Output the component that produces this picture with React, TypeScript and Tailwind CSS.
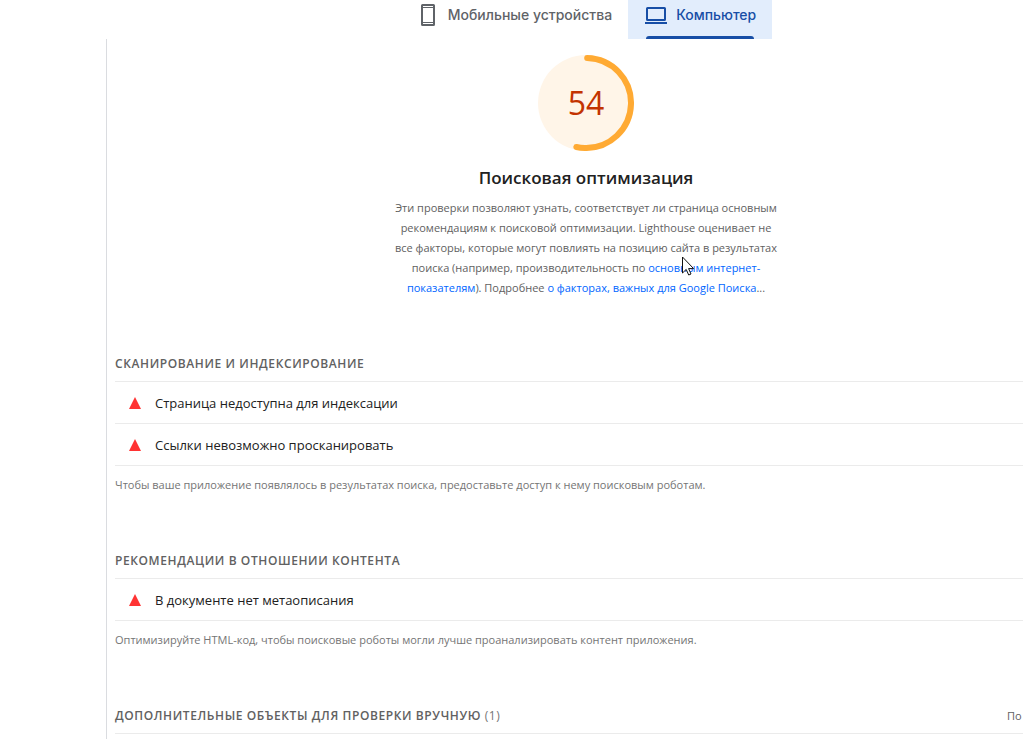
import React, { useState } from 'react';

interface AuditGroup {
  title: string;
  audits: string[];
  description: string;
}

const groups: AuditGroup[] = [
  {
    title: 'Сканирование и индексирование',
    audits: ['Страница недоступна для индексации', 'Ссылки невозможно просканировать'],
    description: 'Чтобы ваше приложение появлялось в результатах поиска, предоставьте доступ к нему поисковым роботам.',
  },
  {
    title: 'Рекомендации в отношении контента',
    audits: ['В документе нет метаописания'],
    description: 'Оптимизируйте HTML-код, чтобы поисковые роботы могли лучше проанализировать контент приложения.',
  },
];

function PhoneIcon() {
  return (
    <svg viewBox="0 0 24 24" className="w-6 h-6" fill="currentColor" aria-hidden="true">
      <path fillRule="evenodd" d="M6.5 1h11A1.5 1.5 0 0 1 19 2.5v19a1.5 1.5 0 0 1-1.5 1.5h-11A1.5 1.5 0 0 1 5 21.5v-19A1.5 1.5 0 0 1 6.5 1zM7 3v1h10V3H7zm0 2v14h10V5H7zm0 15v1h10v-1H7z" />
    </svg>
  );
}

function LaptopIcon() {
  return (
    <svg viewBox="0 0 24 24" className="w-6 h-6" fill="currentColor" aria-hidden="true">
      <path fillRule="evenodd" d="M3.5 4h17A1.5 1.5 0 0 1 22 5.5v11a1.5 1.5 0 0 1-1.5 1.5h-17A1.5 1.5 0 0 1 2 16.5v-11A1.5 1.5 0 0 1 3.5 4zM4 6v10h16V6H4z" />
      <path d="M1 19h22v2H1z" />
    </svg>
  );
}

function Gauge({ score }: { score: number }) {
  const length = 2 * Math.PI * 45;
  return (
    <div className="relative w-24 h-24">
      <svg viewBox="0 0 96 96" className="w-24 h-24" fill="none" aria-hidden="true">
        <circle cx="48" cy="48" r="48" fill="#fff5e8" />
        <circle
          cx="48"
          cy="48"
          r="45"
          stroke="#ffaa33"
          strokeWidth="6"
          strokeLinecap="round"
          strokeDasharray={`${(length * score) / 100 - 3} ${length}`}
          transform="rotate(-88.5 48 48)"
        />
      </svg>
      <div className="absolute inset-0 flex items-center justify-center text-[32px] leading-8 text-[#c33300]">
        {score}
      </div>
    </div>
  );
}

function Cursor() {
  return (
    <svg viewBox="0 0 12 19" className="absolute left-[287px] top-[58px] w-3 h-5" aria-hidden="true">
      <path d="M.5.5v16l3.7-3.6 2.5 5.6 2.3-1-2.4-5.4h5z" fill="#fff" stroke="#111" strokeLinejoin="round" />
    </svg>
  );
}

function GroupHeader({ title, count }: { title: string; count?: number }) {
  return (
    <h3 className="text-[12px] leading-5 font-semibold uppercase tracking-wider text-[#616161]">
      {title}
      {count !== undefined && <span className="font-normal text-[#757575]"> ({count})</span>}
    </h3>
  );
}

export default function App() {
  const [device, setDevice] = useState<'mobile' | 'desktop'>('desktop');

  const tabClass = (active: boolean) =>
    `relative flex h-[39px] items-start gap-2 pt-[3px] px-4 font-['Inter'] text-[14px] leading-6 font-medium ${
      active ? 'bg-[#e2edfc] text-[#174ea6]' : 'text-[#5f6368]'
    }`;

  return (
    <div className="min-h-screen overflow-hidden bg-white font-['Open_Sans',sans-serif]">
      <div className="-mr-[149px]">
        {/* Device tabs */}
        <div role="tablist" className="flex justify-center">
          <button role="tab" aria-selected={device === 'mobile'} onClick={() => setDevice('mobile')} className={tabClass(device === 'mobile')}>
            <PhoneIcon />
            Мобильные устройства
            {device === 'mobile' && <span className="absolute inset-x-[18px] bottom-0 h-[3px] rounded-t bg-[#174ea6]" />}
          </button>
          <button role="tab" aria-selected={device === 'desktop'} onClick={() => setDevice('desktop')} className={tabClass(device === 'desktop')}>
            <LaptopIcon />
            Компьютер
            {device === 'desktop' && <span className="absolute inset-x-[18px] bottom-0 h-[3px] rounded-t bg-[#174ea6]" />}
          </button>
        </div>

        <main className="mx-auto min-h-[calc(100vh-39px)] max-w-[960px] border-x border-[#dadce0] px-2 pt-4">
          {/* Category score */}
          <section className="flex flex-col items-center">
            <Gauge score={54} />
            <h2 className="mt-[13px] text-[17px] leading-7 font-semibold text-[#212121]">Поисковая оптимизация</h2>
            <p className="relative mt-[6px] whitespace-nowrap text-center text-[11px] leading-5 text-[#616161]">
              Эти проверки позволяют узнать, соответствует ли страница основным
              <br />
              рекомендациям к поисковой оптимизации. Lighthouse оценивает не
              <br />
              все факторы, которые могут повлиять на позицию сайта в результатах
              <br />
              поиска (например, производительность по{' '}
              <a href="#vitals" className="text-[#0066ff]">
                основным интернет-
                <br />
                показателям
              </a>
              ). Подробнее{' '}
              <a href="#factors" className="text-[#0066ff]">
                о факторах, важных для Google Поиска
              </a>
              ...
              <Cursor />
            </p>
          </section>

          {/* Audit groups */}
          {groups.map((group) => (
            <section key={group.title} className="mt-14">
              <GroupHeader title={group.title} />
              <ul className="mt-[7px] border-t border-[#ebebeb]">
                {group.audits.map((audit) => (
                  <li key={audit} className="flex h-[42px] items-center gap-[14px] border-b border-[#ebebeb] pl-[14px] text-[13px] leading-5 text-[#212121]">
                    <svg viewBox="0 0 12 12" className="w-3 h-3" aria-hidden="true">
                      <path d="M6 0l6 12H0z" fill="#ff3333" />
                    </svg>
                    {audit}
                  </li>
                ))}
              </ul>
              <p className="mt-[9px] text-[11px] leading-5 text-[#757575]">{group.description}</p>
            </section>
          ))}

          {/* Manual checks */}
          <section className="mt-14 flex justify-between border-b border-[#ebebeb] pb-[7px]">
            <GroupHeader title="Дополнительные объекты для проверки вручную" count={1} />
            <button className="w-[50px] text-left text-[11px] leading-5 text-[#616161]">По</button>
          </section>
        </main>
      </div>
    </div>
  );
}
